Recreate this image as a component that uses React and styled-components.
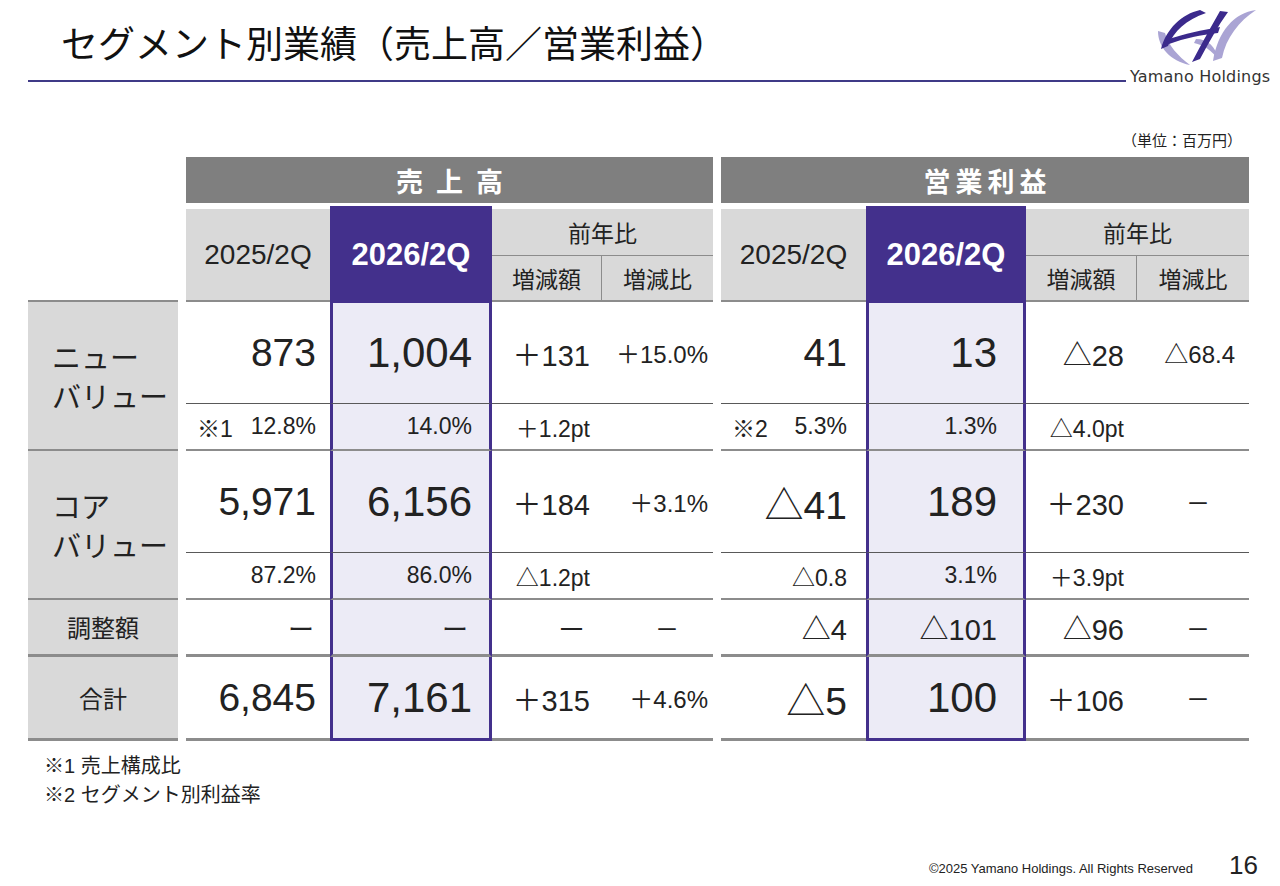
import React from 'react';
import styled, { createGlobalStyle, css } from 'styled-components';

const PURPLE = '#43308c';
const LAVENDER = '#ecebf6';
const LIGHT = '#d9d9d9';
const BAR = '#7f7f7f';
const INK = '#222222';

const GlobalStyle = createGlobalStyle`
  html, body {
    margin: 0;
    padding: 0;
    background: #ffffff;
  }
  body {
    font-family: "Liberation Sans", "Noto Sans CJK JP", sans-serif;
    color: ${INK};
  }
`;

const Page = styled.div`
  width: 1280px;
  height: 886px;
  display: flex;
  flex-direction: column;
  overflow: hidden;
`;

const Header = styled.header`
  display: flex;
  height: 90px;
  padding-left: 28px;
  padding-right: 8px;
`;

const HeaderMain = styled.div`
  flex: 1;
  display: flex;
  flex-direction: column;
  padding-top: 22px;
`;

const Title = styled.h1`
  margin: 0;
  padding-left: 33px;
  font-family: "Noto Sans CJK JP", sans-serif;
  font-weight: 400;
  font-size: 37px;
  line-height: 40px;
  color: #111;
`;

const Rule = styled.div`
  height: 2px;
  margin-top: 18px;
  background: #3f3a87;
`;

const Brand = styled.div`
  width: 146px;
  display: flex;
  flex-direction: column;
  padding-top: 9px;
`;

const LogoMark = styled.svg`
  width: 100px;
  height: 56px;
  margin-left: 30px;
`;

const BrandName = styled.div`
  margin-top: 4px;
  padding-left: 4px;
  font-family: "DejaVu Sans", sans-serif;
  font-size: 16px;
  letter-spacing: 0.2px;
  line-height: 16px;
  color: #333;
  white-space: nowrap;
`;

const Unit = styled.div`
  margin-top: 40px;
  padding-right: 38px;
  text-align: right;
  font-family: "Noto Sans CJK JP", sans-serif;
  font-size: 15px;
  line-height: 20px;
`;

const Board = styled.div`
  display: flex;
  gap: 8px;
  margin-top: 7px;
  margin-left: 28px;
`;

const ROW_TEMPLATE = '52px 47px 46px 102px 47px 102px 47px 57px 84px';

const Panel = styled.div`
  width: ${p => p.$width}px;
  display: grid;
  grid-template-columns: ${p => p.$cols};
  grid-template-rows: ${ROW_TEMPLATE};
`;

const TitleBar = styled.div`
  grid-column: 1 / -1;
  grid-row: 1;
  margin-bottom: 6px;
  background: ${BAR};
  color: #fff;
  font-family: "Noto Sans CJK JP", sans-serif;
  font-weight: 700;
  font-size: 27px;
  letter-spacing: ${p => p.$spacing}px;
  padding-left: ${p => p.$spacing}px;
  display: flex;
  align-items: center;
  justify-content: center;
`;

const HeadCell = styled.div`
  background: ${LIGHT};
  display: flex;
  align-items: center;
  justify-content: center;
  box-sizing: border-box;
  font-family: "Noto Sans CJK JP", sans-serif;
  font-size: 23px;
  color: ${INK};
`;

const YearHead = styled(HeadCell)`
  grid-row: 2 / 4;
  grid-column: 1;
  font-family: "Liberation Sans", sans-serif;
  font-size: 28px;
  border-bottom: 2px solid #8c8c8c;
`;

const CurrentHead = styled.div`
  grid-row: 2 / 4;
  grid-column: 2;
  margin-top: -3px;
  margin-bottom: -1px;
  background: ${PURPLE};
  color: #fff;
  font-weight: 700;
  font-size: 31px;
  display: flex;
  align-items: center;
  justify-content: center;
  position: relative;
  z-index: 1;
`;

const CompareHead = styled(HeadCell)`
  grid-row: 2;
  grid-column: 3 / 5;
  border-bottom: 1px solid #8c8c8c;
`;

const SubHead = styled(HeadCell)`
  grid-row: 3;
  grid-column: ${p => p.$col};
  border-bottom: 2px solid #8c8c8c;
  ${p => p.$divider && css`border-right: 1px solid #8c8c8c;`}
`;

const LINES = {
  thin: '1px solid #595959',
  mid: '2px solid #8c8c8c',
  thick: '3px solid #8c8c8c',
};

const Cell = styled.div`
  display: flex;
  align-items: center;
  justify-content: ${p => (p.$align === 'center' ? 'center' : 'flex-end')};
  box-sizing: border-box;
  padding: 0 ${p => p.$pr}px 0 ${p => p.$pl}px;
  font-size: ${p => p.$size}px;
  white-space: nowrap;
  border-bottom: ${p => LINES[p.$line]};
  ${p => p.$current && css`
    background: ${LAVENDER};
    border-left: 3px solid ${PURPLE};
    border-right: 3px solid ${PURPLE};
  `}
  ${p => p.$current && p.$last && css`
    border-bottom-color: ${PURPLE};
  `}
`;

const Note = styled.span`
  margin-right: auto;
  padding-left: 11px;
`;

const Spacer = styled.div`
  grid-row: 1 / 4;
  border-bottom: 2px solid #8c8c8c;
`;

const Segment = styled.div`
  grid-row: span ${p => p.$span};
  background: ${LIGHT};
  box-sizing: border-box;
  border-bottom: ${p => LINES[p.$line]};
  display: flex;
  flex-direction: column;
  justify-content: center;
  align-items: ${p => (p.$wide ? 'flex-start' : 'center')};
  padding-left: ${p => (p.$wide ? 24 : 0)}px;
  font-family: "Noto Sans CJK JP", sans-serif;
  font-size: ${p => (p.$wide ? 29 : 24)}px;
  line-height: ${p => (p.$wide ? 42 : 36)}px;
  color: ${INK};
`;

const SegmentLine = styled.span`
  display: block;
  margin-top: ${p => (p.$first ? 0 : -3)}px;
`;

const Footnotes = styled.div`
  margin-top: 11px;
  padding-left: 44px;
  font-size: 20px;
  line-height: 29px;
`;

const Footer = styled.footer`
  margin-top: auto;
  display: flex;
  justify-content: flex-end;
  align-items: flex-end;
  gap: 36px;
  padding: 0 22px 7px 0;
`;

const Copyright = styled.span`
  font-size: 13px;
  line-height: 16px;
  margin-bottom: 2px;
`;

const PageNo = styled.span`
  font-size: 26px;
  line-height: 28px;
`;

const ROWS = [
  { kind: 'main', line: 'thin' },
  { kind: 'sub', line: 'mid' },
  { kind: 'main', line: 'thin' },
  { kind: 'sub', line: 'mid' },
  { kind: 'adj', line: 'thick' },
  { kind: 'total', line: 'thick' },
];

const SIZES = {
  main: [39, 42, 29, 24],
  sub: [23, 23, 23, 23],
  adj: [29, 29, 29, 24],
  total: [39, 42, 29, 24],
};

const DASH = { t: '－', align: 'center', pl: 24 };

const SALES = {
  title: '売上高',
  spacing: 13,
  width: 527,
  cols: '144px 162px 110px 111px',
  pads: [14, 17, 12, 5],
  rows: [
    ['873', '1,004', '＋131', '＋15.0%'],
    [{ t: '12.8%', note: '※1' }, '14.0%', '＋1.2pt', ''],
    ['5,971', '6,156', '＋184', '＋3.1%'],
    ['87.2%', '86.0%', '△1.2pt', ''],
    [{ t: 'ー', size: 26, pr: 16 }, { t: 'ー', size: 26, pr: 21 }, { t: '－', pr: 16 }, DASH],
    ['6,845', '7,161', '＋315', '＋4.6%'],
  ],
};

const PROFIT = {
  title: '営業利益',
  spacing: 5,
  width: 528,
  cols: '145px 160px 111px 112px',
  pads: [19, 26, 13, 14],
  rows: [
    ['41', '13', '△28', '△68.4'],
    [{ t: '5.3%', note: '※2' }, '1.3%', '△4.0pt', ''],
    ['△41', '189', '＋230', DASH],
    ['△0.8', '3.1%', '＋3.9pt', ''],
    ['△4', '△101', '△96', DASH],
    ['△5', '100', '＋106', DASH],
  ],
};

const Logo = () => (
  <LogoMark viewBox="0 0 100 56">
    {/* light swooshes */}
    <path d="M2 22 C2 38 14 52 34 56 C22 47 12 36 9 24 Z" fill="#aaa4d4" />
    <path d="M100 1 C78 4 62 22 57 52 L66 49 C70 29 83 12 100 1 Z" fill="#aaa4d4" />
    <path d="M40 30 C52 30 60 38 62 50 C56 42 48 36 38 34 Z" fill="#aaa4d4" />
    {/* dark strokes */}
    <path d="M44 1 C26 5 10 20 5 40 L12 37 C18 22 30 11 50 4 Z" fill="#3b2a8c" />
    <path d="M64 2 C56 16 46 34 36 53 L44 50 C53 33 62 17 72 3 Z" fill="#3b2a8c" />
    <path d="M13 30 C28 25 46 21 64 18 L62 24 C45 26 29 29 13 35 Z" fill="#3b2a8c" />
  </LogoMark>
);

const LabelColumn = () => (
  <Panel $width={150} $cols="150px">
    <Spacer />
    <Segment $span={2} $line="mid" $wide>
      <SegmentLine $first>ニュー</SegmentLine>
      <SegmentLine>バリュー</SegmentLine>
    </Segment>
    <Segment $span={2} $line="mid" $wide>
      <SegmentLine $first>コア</SegmentLine>
      <SegmentLine>バリュー</SegmentLine>
    </Segment>
    <Segment $span={1} $line="thick">調整額</Segment>
    <Segment $span={1} $line="thick">合計</Segment>
  </Panel>
);

const MetricTable = ({ data }) => (
  <Panel $width={data.width} $cols={data.cols}>
    <TitleBar $spacing={data.spacing}>{data.title}</TitleBar>
    <YearHead>2025/2Q</YearHead>
    <CurrentHead>2026/2Q</CurrentHead>
    <CompareHead>前年比</CompareHead>
    <SubHead $col={3} $divider>増減額</SubHead>
    <SubHead $col={4}>増減比</SubHead>
    {data.rows.map((row, r) =>
      row.map((raw, c) => {
        const cell = typeof raw === 'string' ? { t: raw } : raw;
        const kind = ROWS[r].kind;
        return (
          <Cell
            key={`${r}-${c}`}
            $line={ROWS[r].line}
            $current={c === 1}
            $last={r === ROWS.length - 1}
            $align={cell.align}
            $pl={cell.pl ?? 0}
            $pr={cell.pr ?? data.pads[c]}
            $size={cell.size ?? SIZES[kind][c]}
          >
            {cell.note && <Note>{cell.note}</Note>}
            {cell.t}
          </Cell>
        );
      })
    )}
  </Panel>
);

export default function App() {
  return (
    <>
      <GlobalStyle />
      <Page>
        <Header>
          <HeaderMain>
            <Title>セグメント別業績（売上高／営業利益）</Title>
            <Rule />
          </HeaderMain>
          <Brand>
            <Logo />
            <BrandName>Yamano Holdings</BrandName>
          </Brand>
        </Header>
        <Unit>（単位：百万円）</Unit>
        <Board>
          <LabelColumn />
          <MetricTable data={SALES} />
          <MetricTable data={PROFIT} />
        </Board>
        <Footnotes>
          <div>※1 売上構成比</div>
          <div>※2 セグメント別利益率</div>
        </Footnotes>
        <Footer>
          <Copyright>©2025 Yamano Holdings. All Rights Reserved</Copyright>
          <PageNo>16</PageNo>
        </Footer>
      </Page>
    </>
  );
}
